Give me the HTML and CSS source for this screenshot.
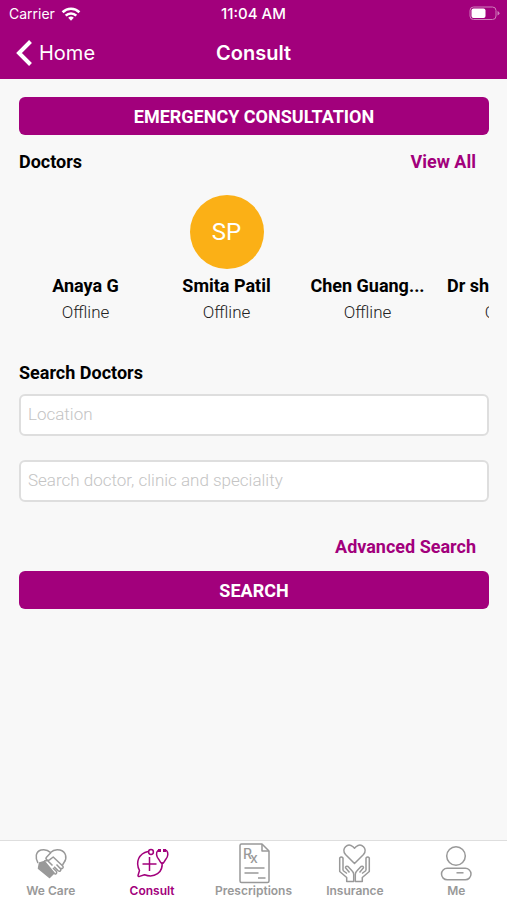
FILE: index.html
```html
<!DOCTYPE html>
<html lang="en">
<head>
    <meta charset="UTF-8">
    <meta name="viewport" content="width=device-width, initial-scale=1.0">
    <title>Consult</title>
    <link rel="stylesheet" href="styles.css">
</head>
<body>
    <header class="header">
        <div class="status-bar">
            <div class="carrier">
                <span>Carrier</span>
                <svg width="20" height="14" viewBox="0 0 20 14" fill="none" stroke="#fff" stroke-width="2.6">
                    <path d="M1.6 5.2a12 12 0 0 1 16.8 0"/>
                    <path d="M4.7 8.6a7.6 7.6 0 0 1 10.6 0"/>
                    <path d="M7.2 10.8a4 4 0 0 1 5.6 0L10 13.8z" fill="#fff" stroke="none"/>
                </svg>
            </div>
            <div class="time">11:04 AM</div>
            <div class="battery">
                <svg width="31" height="15" viewBox="0 0 31 15">
                    <rect x="1" y="1" width="26" height="12.500" rx="3.500" fill="none" stroke="#cf7fbb"/>
                    <rect x="2.500" y="2.500" width="14" height="9.500" rx="2" fill="#fff"/>
                    <path d="M28.500 5v4.500q2-.8 2-2.200T28.500 5z" fill="#cf7fbb"/>
                </svg>
            </div>
        </div>
        <div class="nav-bar">
            <a class="back" href="#">
                <svg width="16" height="28" viewBox="0 0 16 28" fill="none" stroke="#fff" stroke-width="4">
                    <path d="M14.500 2.500L3 14l11.500 11.500"/>
                </svg>
                Home
            </a>
            <h1>Consult</h1>
        </div>
    </header>

    <main class="content">
        <button type="button" class="btn">EMERGENCY CONSULTATION</button>

        <div class="section-head">
            <h2>Doctors</h2>
            <a href="#">View All</a>
        </div>

        <div class="doctors">
            <div class="doctor">
                <div class="avatar"></div>
                <div class="name">Anaya G</div>
                <div class="status">Offline</div>
            </div>
            <div class="doctor">
                <div class="avatar initials">SP</div>
                <div class="name">Smita Patil</div>
                <div class="status">Offline</div>
            </div>
            <div class="doctor">
                <div class="avatar"></div>
                <div class="name">Chen Guang...</div>
                <div class="status">Offline</div>
            </div>
            <div class="doctor">
                <div class="avatar"></div>
                <div class="name">Dr sharmila Rao</div>
                <div class="status">Offline</div>
            </div>
        </div>

        <form class="search-form">
            <h2>Search Doctors</h2>
            <input type="text" name="location" placeholder="Location" aria-label="Location">
            <input type="text" name="query" placeholder="Search doctor, clinic and speciality" aria-label="Search doctor, clinic and speciality">
            <a class="advanced" href="#">Advanced Search</a>
            <button type="button" class="btn">SEARCH</button>
        </form>
    </main>

    <nav class="tab-bar">
        <a class="tab" href="#">
            <svg viewBox="0 0 40 42">
                <path d="M7 21C4 16 4.500 9.500 10 8c4-1 7 0 9.500 2.500C22 8 25 7 29 8c6 1.500 7.500 8 4 12.500L31.500 23"/>
                <path d="M20 10.500l-4.500 4.800c-1.500 2 1 3.700 3 2.500l3.700-2.800 9.500 9c1.500 1.800-.8 3.500-2.400 2"/>
                <path d="M25.500 22.500l4 4.200c1.200 2-.8 3.300-2.300 2l-4-4M22 26l3.500 3.500c.8 1.800-1 3-2.300 2L20 28.500"/>
                <path d="M8.500 21l5-1.500 9.500 11.500-4.500 4.500L7.500 26.500z" fill="currentColor"/>
                <path d="M13 19l3.500-.5 5 5"/>
            </svg>
            We Care
        </a>
        <a class="tab active" href="#">
            <svg viewBox="0 0 40 42">
                <path d="M16 9.500C7 11.500 3 20 7.500 28.500L6 33.500c0 1 .7 1.200 1.500.9l5-1.600C22.500 36.500 31.500 30.500 30 20"/>
                <circle cx="19" cy="10" r="2.400"/>
                <path d="M17.500 15v14M10.500 22h14"/>
                <path d="M28 8.500h-2c-2.500 2-1.500 6 .5 8.500s2.200 4.500 3.800 4.500 2-2.500 3.700-4.500c2.200-2.700 2.500-6.500.5-8.500h-2"/>
                <path d="M27.500 7v3M32.500 7v3" stroke-width="3"/>
            </svg>
            Consult
        </a>
        <a class="tab" href="#">
            <svg viewBox="0 0 40 42">
                <path d="M7.500 2h20.500l7 7v30q0 1.500-1.500 1.500h-26Q6 40.500 6 39V3.500Q6 2 7.500 2z"/>
                <path d="M28 2v7h7"/>
                <text x="9" y="17" class="rx">R<tspan dx="-2" dy="4">x</tspan></text>
                <path d="M10.500 26h20M10.500 31h14M24 36h7.500"/>
            </svg>
            Prescriptions
        </a>
        <a class="tab" href="#">
            <svg viewBox="0 0 40 42">
                <path d="M19.500 21.500L10.500 12.500C6 7 12.500 0 18 4.800l1.500 1.500L21 4.800C26.500 0 33 7 28.500 12.500z"/>
                <path d="M8 28.500V16q-1.700-2-3.300 0v13.500l7 6V39.500h7V32.500q0-2-1.500-3.500L13 24.500q-2.500-.8-2.500 1.200l4 4.800M8 28.500l4 3"/>
                <path d="M31 28.500V16q1.700-2 3.300 0v13.500l-7 6V39.500h-7V32.500q0-2 1.500-3.500L26 24.500q2.500-.8 2.500 1.200l-4 4.800M31 28.500l-4 3"/>
            </svg>
            Insurance
        </a>
        <a class="tab" href="#">
            <svg viewBox="0 0 40 42">
                <circle cx="20" cy="14" r="9.300"/>
                <rect x="5.500" y="26.300" width="29.500" height="11.500" rx="5.700"/>
                <path d="M20.500 30.800h7"/>
            </svg>
            Me
        </a>
    </nav>
</body>
</html>
```
FILE: styles.css
```css
* {
    box-sizing: border-box;
}
body {
    margin: 0;
    min-height: 100vh;
    display: flex;
    flex-direction: column;
    background-color: #f8f8f8;
    font-family: Roboto, sans-serif;
    font-size: 18px;
    color: #000;
}
a {
    color: #a2007c;
    text-decoration: none;
}
h1, h2 {
    margin: 0;
}
h2 {
    font-size: 18px;
    line-height: 22px;
    font-weight: 700;
}
.header {
    background-color: #a2007c;
    color: white;
    font-family: Inter, sans-serif;
}
.status-bar,
.nav-bar {
    display: grid;
    grid-template-columns: 1fr auto 1fr;
    align-items: center;
}
.status-bar {
    height: 27px;
    padding: 0 7px;
    font-size: 14px;
}
.carrier {
    display: flex;
    align-items: center;
    gap: 6px;
    padding-left: 2px;
}
.time {
    font-size: 15px;
    font-weight: 500;
}
.battery {
    display: flex;
    justify-content: flex-end;
}
.nav-bar {
    height: 52px;
    padding: 0 16px;
}
.back {
    display: flex;
    align-items: center;
    gap: 7px;
    color: white;
    font-size: 20px;
}
.nav-bar h1 {
    font-size: 20px;
    font-weight: 600;
}
.content {
    flex: 1;
    min-width: 0;
    padding: 18px 18px 18px 19px;
}
.btn {
    display: block;
    width: 100%;
    height: 38px;
    border: none;
    border-radius: 6px;
    background-color: #a2007c;
    color: white;
    font-family: inherit;
    font-size: 18px;
    font-weight: 700;
    cursor: pointer;
}
.section-head {
    display: flex;
    justify-content: space-between;
    padding: 16px 13px 0 0;
    line-height: 22px;
    font-weight: 700;
}
.doctors {
    display: flex;
    gap: 18px;
    margin-top: 22px;
    padding-left: 5px;
    overflow: hidden;
}
.doctor {
    flex: 0 0 123px;
    min-width: 0;
    text-align: center;
}
.avatar {
    width: 74px;
    height: 74px;
    margin: 0 auto 5px;
    border-radius: 50%;
}
.initials {
    background-color: #fbb016;
    color: white;
    font-size: 24px;
    line-height: 74px;
}
.name {
    line-height: 24px;
    font-weight: 700;
    white-space: nowrap;
    overflow: hidden;
    text-overflow: ellipsis;
}
.status {
    margin-top: 2px;
    color: #222;
    font-size: 17px;
    line-height: 24px;
    font-weight: 300;
}
.search-form {
    display: flex;
    flex-direction: column;
    margin-top: 38px;
}
.search-form input {
    width: 100%;
    height: 42px;
    margin: 10px 0 14px;
    padding: 0 7px 2px;
    border: 2px solid #dedede;
    border-radius: 6px;
    background-color: white;
    font-family: inherit;
    font-size: 17px;
    font-weight: 300;
}
.search-form input::placeholder {
    color: #c4c4c4;
}
.advanced {
    align-self: flex-end;
    margin: 20px 13px 13px 0;
    line-height: 22px;
    font-weight: 700;
}
.tab-bar {
    display: flex;
    height: 60px;
    border-top: 1px solid #dedede;
    background-color: white;
}
.tab {
    flex: 1 1 0;
    display: flex;
    flex-direction: column;
    align-items: center;
    padding-top: 1px;
    color: #999;
    font-family: Inter, sans-serif;
    font-size: 12px;
    line-height: 14px;
    font-weight: 600;
}
.tab.active {
    color: #a2007c;
}
.tab svg {
    width: 40px;
    height: 42px;
    fill: none;
    stroke: currentColor;
    stroke-width: 1.5;
    stroke-linejoin: round;
}
.tab .rx {
    fill: currentColor;
    stroke: none;
    font-size: 14px;
    font-weight: 500;
}
```
